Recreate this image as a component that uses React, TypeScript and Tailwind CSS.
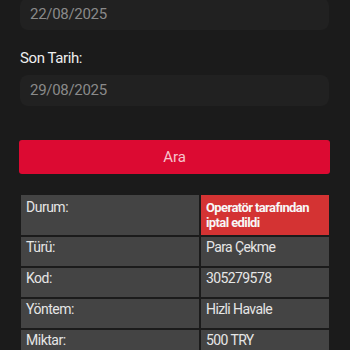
export default function App() {
  const rows: { label: string; value: string; status?: boolean }[] = [
    { label: "Durum:", value: "Operatör tarafından iptal edildi", status: true },
    { label: "Türü:", value: "Para Çekme" },
    { label: "Kod:", value: "305279578" },
    { label: "Yöntem:", value: "Hizli Havale" },
    { label: "Miktar:", value: "500 TRY" },
  ];

  return (
    <div className="h-[350px] w-[350px] overflow-hidden bg-[#1b1b1b] font-['Roboto',sans-serif]">
      <div className="pl-[20px] pr-[21px]">
        <div className="-mt-[2px] flex h-[32px] items-center rounded-lg bg-[#212121] pl-[10px] text-[15px] tracking-[-0.3px] text-[#8a8a8a]">
          22/08/2025
        </div>

        <div className="mt-[19px] text-[15px] leading-[18px] tracking-[-0.4px] text-[#eeeeee]">Son Tarih:</div>

        <div className="mt-[8px] flex h-[31px] items-center rounded-lg bg-[#212121] pl-[10px] text-[15px] tracking-[-0.3px] text-[#8a8a8a]">
          29/08/2025
        </div>

        <button className="mt-[34px] -ml-[1px] flex h-[34px] w-[311px] items-center justify-center rounded-[3px] bg-[#dc0a32] text-[15px] text-[#f6c4cc]">
          Ara
        </button>

        <div className="mt-[21px] ml-[1px] flex flex-col gap-[2px]">
          {rows.map((r) => (
            <div key={r.label} className="flex gap-[2px]">
              <div
                className={`w-[178px] bg-[#444444] px-[5px] text-[14px] leading-[17px] tracking-[-0.5px] text-[#e6e6e6] ${
                  r.status ? "h-[40px] pt-[4px]" : "h-[29px] pt-[2px]"
                }`}
              >
                {r.label}
              </div>
              <div
                className={`w-[128px] px-[5px] ${
                  r.status
                    ? "h-[40px] bg-[#d43333] pt-[5px] text-[13px] font-bold leading-[15px] tracking-[-0.6px] text-[#f7f7f7]"
                    : "h-[29px] bg-[#444444] pt-[2px] text-[14px] leading-[17px] tracking-[-0.6px] text-[#e6e6e6]"
                }`}
              >
                {r.value}
              </div>
            </div>
          ))}
        </div>
      </div>
    </div>
  );
}
